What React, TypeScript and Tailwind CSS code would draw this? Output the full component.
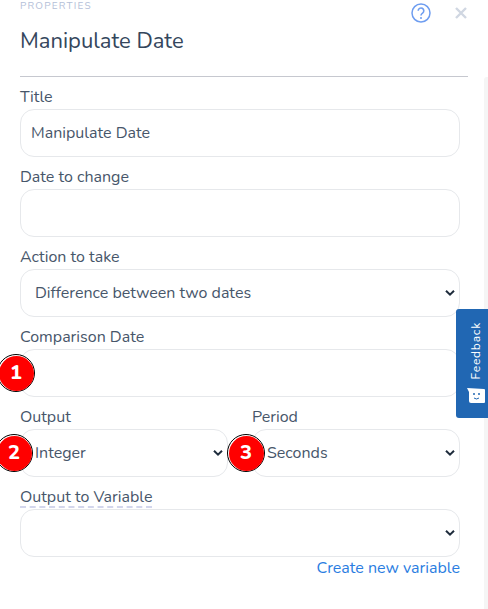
import React from "react";

const Marker = ({ n, className }: { n: number; className: string }) => (
  <div
    className={
      "absolute z-10 flex h-[38px] w-[38px] items-center justify-center rounded-full border border-black bg-white " +
      className
    }
  >
    <div className="flex h-[35px] w-[35px] items-center justify-center rounded-full bg-[#ff0000] text-[20px] font-extrabold text-white">
      {n}
    </div>
  </div>
);

const Chevron = () => (
  <svg width="10" height="7" viewBox="0 0 10 7" className="absolute right-[4px] top-1/2 -translate-y-1/2" fill="none">
    <path d="M1 1.2 5 5.2 9 1.2" stroke="#1f2d3d" strokeWidth="2" />
  </svg>
);

const Field = ({
  label,
  value,
  select,
  indent,
  dashed,
  className,
}: {
  label: string;
  value?: string;
  select?: boolean;
  indent?: boolean;
  dashed?: boolean;
  className?: string;
}) => (
  <div className={className}>
    <div className="h-[32px] pt-[9px] text-[16px] leading-[22px] text-[#47566a]">
      <span className={dashed ? "inline-block border-b-2 border-dashed border-[#d3d6ec] leading-[17px]" : ""}>{label}</span>
    </div>
    <div className={"relative flex h-[48px] items-center rounded-[14px] border border-[#e6e8eb] bg-white text-[16px] text-[#47566a] " + (indent ? "pl-[14px]" : "pl-[10px]")}>
      {value}
      {select && <Chevron />}
    </div>
  </div>
);

export default function App() {
  return (
    <div className="relative h-[609px] w-[488px] overflow-hidden bg-white font-['Nunito','Lato','Noto_Sans',sans-serif]">
      <div className="flex h-full">
        <div className="w-[484px] pl-[20px] pr-[16px]">
          <div className="flex justify-between">
            <div>
              <div className="h-[13px] text-[10px] leading-[13px] tracking-[1.2px] text-[#b4c0d8]">PROPERTIES</div>
              <h1 className="mt-[15px] text-[22px] leading-[26px] text-[#34465c]">Manipulate Date</h1>
            </div>
            <div className="flex items-start gap-[24px] pr-[1px] pt-[3px]">
              <svg width="20" height="20" viewBox="0 0 20 20" fill="none">
                <circle cx="10" cy="10" r="9" stroke="#6e9df0" strokeWidth="1.5" />
                <path d="M7.2 7.8a2.8 2.8 0 1 1 4.4 2.3c-1 .7-1.6 1.1-1.6 2.4" stroke="#6e9df0" strokeWidth="1.6" />
                <circle cx="10" cy="15" r="1" fill="#6e9df0" />
              </svg>
              <svg width="12" height="12" viewBox="0 0 12 12" className="mt-[4px]" fill="none">
                <path d="M1 1l10 10M11 1 1 11" stroke="#d0d7e2" strokeWidth="2.4" />
              </svg>
            </div>
          </div>
          <div className="mt-[22px] h-px bg-[#c6c8cf]" />
          <div className="w-[440px]">
            <Field label="Title" value="Manipulate Date" />
            <Field label="Date to change" />
            <Field label="Action to take" value="Difference between two dates" select indent />
            <Field label="Comparison Date" />
            <div className="flex gap-[24px]">
              <Field label="Output" value="Integer" select indent className="w-[208px]" />
              <Field label="Period" value="Seconds" select indent className="w-[208px]" />
            </div>
            <Field label="Output to Variable" select dashed />
            <div className="text-right text-[16px] leading-[22px] text-[#2a7de1]">Create new variable</div>
          </div>
        </div>
        <div className="mt-[77px] w-[4px] rounded-tl-[3px] bg-[#f5f5f5]" />
      </div>
      <Marker n={1} className="left-[-3px] top-[354px]" />
      <Marker n={2} className="left-[-5px] top-[434px]" />
      <Marker n={3} className="left-[227px] top-[434px]" />
      <div className="absolute left-[456px] top-[309px] flex h-[109px] w-[32px] flex-col items-center rounded-l-[3px] bg-[#2167b3] pl-[7px] pt-[13px]">
        <span className="rotate-180 text-[12px] leading-none tracking-[0.8px] text-white [writing-mode:vertical-rl]">Feedback</span>
        <svg width="20" height="16" viewBox="0 0 20 16" className="mt-[9px]">
          <path d="M1 0 L18 1 Q19 1 19 2 V14 Q19 15 18 15 H5 Q3 15 3 13 V4 Z" fill="white" />
          <circle cx="8" cy="6" r="1" fill="#2167b3" />
          <circle cx="13" cy="6" r="1" fill="#2167b3" />
          <path d="M8 10 Q10.5 12 13 10" stroke="#2167b3" fill="none" />
        </svg>
      </div>
    </div>
  );
}
